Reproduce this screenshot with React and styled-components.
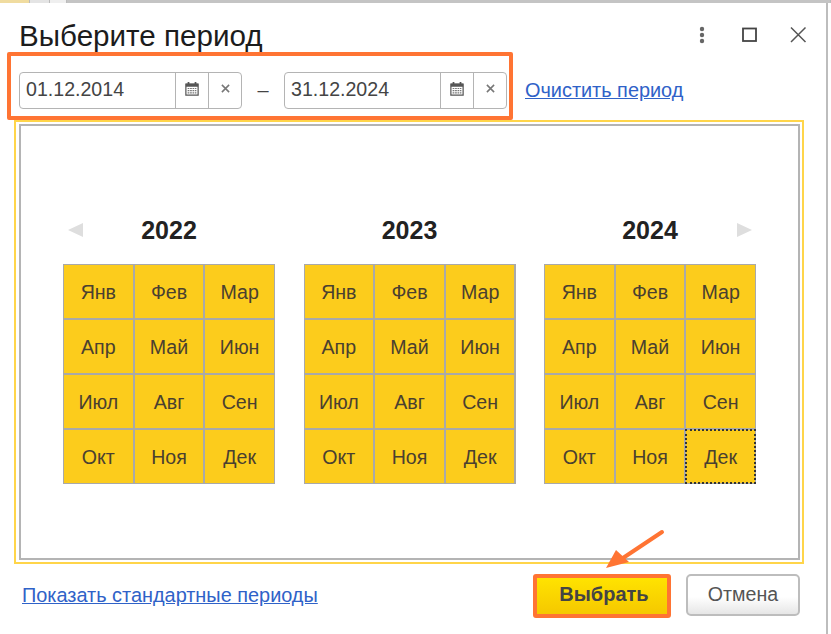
import React from "react";
import styled, { createGlobalStyle } from "styled-components";

const YEARS = ["2022", "2023", "2024"];
const MONTHS = ["Янв", "Фев", "Мар", "Апр", "Май", "Июн", "Июл", "Авг", "Сен", "Окт", "Ноя", "Дек"];

const CalendarIcon = () => (
    <svg width="14" height="15" viewBox="0 0 16 17">
        <path d="M1 3.5h14v12.5H1z" fill="#fff" stroke="#555" strokeWidth="1.4"/>
        <path d="M1 3h14v3.5H1z" fill="#555"/>
        <path d="M4 1v3M12 1v3" stroke="#555" strokeWidth="2"/>
        <path d="M3 8.5h10M3 11h10M3 13.5h10" stroke="#777" strokeWidth="1.3" strokeDasharray="2 .8"/>
    </svg>
);

const CloseIcon = () => (
    <svg width="9" height="9" viewBox="0 0 10 10">
        <path d="M1 1l8 8M9 1l-8 8" stroke="#777" strokeWidth="1.7"/>
    </svg>
);

const DateField = ({value}) => (
    <Field>
        <FieldValue>{value}</FieldValue>
        <FieldButton><CalendarIcon/></FieldButton>
        <FieldButton><CloseIcon/></FieldButton>
    </Field>
);

const YearBlock = ({year, arrow}) => (
    <Year>
        <YearHeader>
            <NavCell>{arrow === "left" && <NavArrow viewBox="0 0 15 14"><path d="M0 7l15-7v14z" fill="#dedede"/></NavArrow>}</NavCell>
            <YearTitle>{year}</YearTitle>
            <NavCell $right>{arrow === "right" && <NavArrow viewBox="0 0 15 14"><path d="M15 7L0 0v14z" fill="#dedede"/></NavArrow>}</NavCell>
        </YearHeader>
        <MonthGrid>
            {MONTHS.map((month) => (
                <Month key={month} $current={year === "2024" && month === "Дек"}>{month}</Month>
            ))}
        </MonthGrid>
    </Year>
);

const App = () => (
    <Page>
        <GlobalStyle/>
        <TopStrip>
            <StripPart $width={30} $color="#f0dca0"/>
            <StripPart $width={20} $color="#e4e4e4"/>
            <StripPart $width={17} $color="#efefef"/>
            <StripPart $width={764} $color="#c4c4c4"/>
        </TopStrip>
        <Dialog>
            <TitleBar>
                <Title>Выберите период</Title>
                <WindowButtons>
                    <MenuDots width="8" height="18" viewBox="0 0 8 18">
                        <circle cx="4" cy="3" r="2.2" fill="#666"/>
                        <circle cx="4" cy="9" r="2.2" fill="#666"/>
                        <circle cx="4" cy="15" r="2.2" fill="#666"/>
                    </MenuDots>
                    <svg width="16" height="16" viewBox="0 0 16 16">
                        <rect x="1" y="1.5" width="13" height="12.5" fill="none" stroke="#444" strokeWidth="1.8"/>
                    </svg>
                    <svg width="18" height="18" viewBox="0 0 18 18">
                        <path d="M2 1.5l14.5 14.5M16.5 1.5L2 16" stroke="#555" strokeWidth="1.5"/>
                    </svg>
                </WindowButtons>
            </TitleBar>
            <PeriodRow>
                <PeriodFrame>
                    <DateField value="01.12.2014"/>
                    <Dash>–</Dash>
                    <DateField value="31.12.2024"/>
                </PeriodFrame>
                <ClearLink href="#">Очистить период</ClearLink>
            </PeriodRow>
            <YellowPanel>
                <CalendarPanel>
                    <YearBlock year={YEARS[0]} arrow="left"/>
                    <YearBlock year={YEARS[1]}/>
                    <YearBlock year={YEARS[2]} arrow="right"/>
                </CalendarPanel>
            </YellowPanel>
            <Footer>
                <FooterLink href="#">Показать стандартные периоды</FooterLink>
                <FooterButtons>
                    <SelectButton>Выбрать</SelectButton>
                    <CancelButton>Отмена</CancelButton>
                </FooterButtons>
            </Footer>
            <Pointer width="60" height="42" viewBox="0 0 60 42">
                <path d="M56 3L14 31" stroke="#ff7433" strokeWidth="4" strokeLinecap="round"/>
                <path d="M0 39L10 21L23 33z" fill="#ff7433"/>
            </Pointer>
        </Dialog>
    </Page>
);

const GlobalStyle = createGlobalStyle`
    html, body {
        margin: 0;
        padding: 0;
        background: #fff;
    }
    * {
        box-sizing: border-box;
    }
`;

const Page = styled.div`
    width: 831px;
    height: 634px;
    overflow: hidden;
    background: #fff;
    font-family: "Liberation Sans", Arial, sans-serif;
    color: #333;
`;

const TopStrip = styled.div`
    display: flex;
    height: 3px;
`;

const StripPart = styled.div`
    width: ${(p) => p.$width}px;
    background: ${(p) => p.$color};
    border-right: 1px solid #bbb;
`;

const Dialog = styled.div`
    position: relative;
    width: 828px;
    height: 631px;
    border-right: 2px solid #bdbdbd;
    display: flex;
    flex-direction: column;
`;

const TitleBar = styled.div`
    height: 49px;
    padding: 17px 19px 0 19px;
    display: flex;
    justify-content: space-between;
    align-items: flex-start;
`;

const Title = styled.div`
    font-size: 29.6px;
    line-height: 32px;
    color: #1c1c1c;
`;

const WindowButtons = styled.div`
    display: flex;
    align-items: center;
    gap: 31px;
    height: 30px;
`;

const MenuDots = styled.svg`
    margin-right: 5px;
`;

const PeriodRow = styled.div`
    display: flex;
    align-items: flex-start;
    padding-left: 7px;
    height: 68px;
`;

const PeriodFrame = styled.div`
    width: 506px;
    height: 68px;
    border: 4px solid #ff7433;
    border-radius: 2px;
    padding: 15px 1px 6px 8px;
    display: flex;
    align-items: center;
`;

const Field = styled.div`
    width: 223px;
    height: 37px;
    display: flex;
    border: 1.5px solid #b4b4b4;
    border-radius: 4px;
    background: #fff;
`;

const FieldValue = styled.div`
    flex: 1;
    padding-left: 6px;
    font-size: 19.6px;
    line-height: 32px;
    color: #444;
`;

const FieldButton = styled.div`
    width: 33px;
    padding-bottom: 4px;
    display: flex;
    align-items: center;
    justify-content: center;
    border-left: 1.5px solid #b4b4b4;
`;

const Dash = styled.div`
    width: 42px;
    text-align: center;
    font-size: 20px;
    color: #444;
`;

const ClearLink = styled.a`
    margin: 26px 0 0 12px;
    font-size: 19.9px;
    line-height: 24px;
    color: #2f62c8;
`;

const YellowPanel = styled.div`
    margin-left: 14px;
    width: 790px;
    height: 444px;
    border: 2px solid #ffd54a;
    padding: 2px 2px 2px 3px;
`;

const CalendarPanel = styled.div`
    height: 100%;
    border: 2px solid #b4b4b4;
    padding: 84px 42px 0 42px;
    display: flex;
    justify-content: space-between;
`;

const Year = styled.div`
    width: 212px;
`;

const YearHeader = styled.div`
    height: 54px;
    padding-bottom: 14px;
    display: grid;
    grid-template-columns: 1fr auto 1fr;
    align-items: center;
`;

const NavCell = styled.div`
    display: flex;
    padding: 0 4px 0 5px;
    justify-content: ${(p) => (p.$right ? "flex-end" : "flex-start")};
`;

const NavArrow = styled.svg`
    width: 15px;
    height: 14px;
`;

const YearTitle = styled.div`
    font-size: 25px;
    font-weight: 700;
    color: #222;
`;

const MonthGrid = styled.div`
    display: grid;
    grid-template-columns: repeat(3, 1fr);
    grid-template-rows: repeat(4, 1fr);
    gap: 2px;
    border: 1.5px solid #a9a9a9;
    background: #a9a9a9;
    height: 220px;
`;

const Month = styled.div`
    display: flex;
    align-items: center;
    justify-content: center;
    padding-top: 2px;
    background: #fccc1c;
    font-size: 19.6px;
    color: #4a4030;
    outline: ${(p) => (p.$current ? "2px dotted #333" : "none")};
    outline-offset: ${(p) => (p.$current ? "-1px" : "0")};
`;

const Footer = styled.div`
    flex: 1;
    padding: 10px 26px 0 22px;
    display: flex;
    justify-content: space-between;
    align-items: flex-start;
`;

const FooterLink = styled.a`
    margin-top: 9px;
    font-size: 19.9px;
    line-height: 24px;
    color: #2f62c8;
`;

const FooterButtons = styled.div`
    display: flex;
    gap: 15px;
`;

const SelectButton = styled.button`
    width: 138px;
    height: 44px;
    border: 4px solid #ff7433;
    border-radius: 3px;
    background: linear-gradient(#ffe300, #f5c800);
    font: 700 20px "Liberation Sans", Arial, sans-serif;
    color: #444;
    padding: 0 0 4px 4px;
`;

const CancelButton = styled.button`
    width: 114px;
    height: 42px;
    border: 2px solid #bdbdbd;
    border-radius: 5px;
    background: linear-gradient(#fff 55%, #e6e6e6);
    font: 400 19.6px "Liberation Sans", Arial, sans-serif;
    color: #555;
    padding: 0 0 1px;
`;

const Pointer = styled.svg`
    position: absolute;
    left: 606px;
    top: 526px;
`;

export default App;
